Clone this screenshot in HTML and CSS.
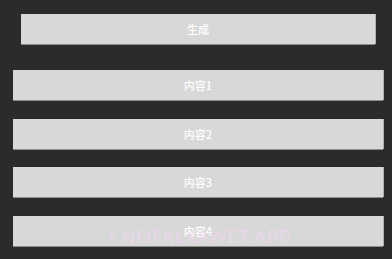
FILE: index.html
```html
<!DOCTYPE html>
<html lang="zh">
<head>
<meta charset="utf-8">
<link rel="stylesheet" href="styles.css">
</head>
<body>
<div class="page">
  <div class="top">
    <button class="btn gen">生成</button>
  </div>
  <div class="list">
    <button class="btn item">内容1</button>
    <button class="btn item">内容2</button>
    <button class="btn item">内容3</button>
    <button class="btn item">内容4</button>
  </div>
  <div class="watermark">• NOFKLXAWET.APP</div>
</div>
</body>
</html>
```
FILE: styles.css
```css
html, body {
  margin: 0;
  padding: 0;
  background: #2b2b2b;
}
.page {
  position: relative;
  width: 392px;
  height: 259px;
  overflow: hidden;
  font-family: "Noto Sans CJK SC", "Noto Sans", sans-serif;
}
.top {
  padding: 14px 17px 0 21px;
}
.btn {
  display: flex;
  align-items: center;
  justify-content: center;
  height: 30px;
  border: none;
  margin: 0;
  padding: 0;
  background: #d7d8d7;
  color: #ffffff;
  font-family: "Noto Sans CJK SC", "Noto Sans", sans-serif;
  font-size: 11px;
  font-weight: 500;
  box-shadow: 0 1px 0 #8c8c8c, 1px 0 0 #b0b0b0;
}
.gen {
  width: 354px;
}
.list {
  display: flex;
  flex-direction: column;
  gap: 18.67px;
  padding: 26px 9px 0 13px;
}
.item {
  width: 370px;
}
.watermark {
  position: absolute;
  left: 108px;
  top: 223px;
  font-family: "Noto Sans", sans-serif;
  font-size: 18.5px;
  letter-spacing: 0.9px;
  color: rgba(250, 215, 250, 0.55);
  white-space: nowrap;
  pointer-events: none;
}
```
